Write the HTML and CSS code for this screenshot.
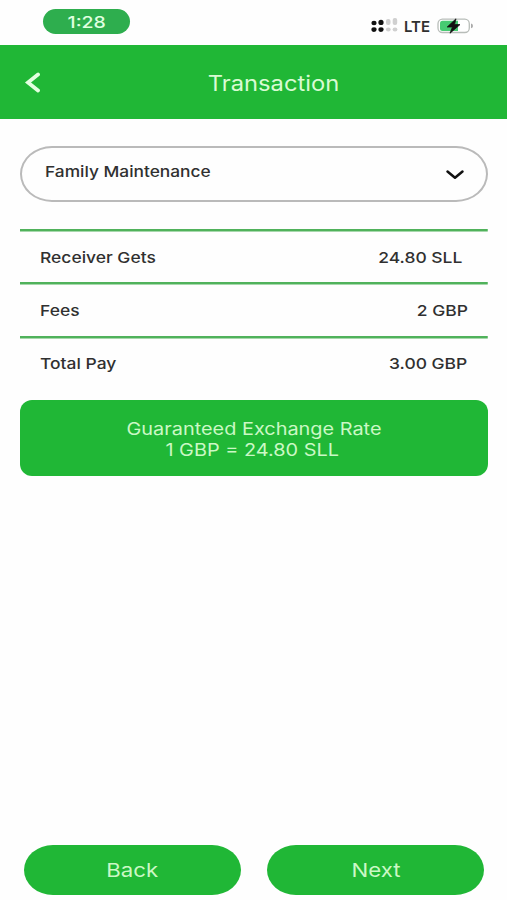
FILE: index.html
```html
<!DOCTYPE html>
<html lang="en">
<head>
<meta charset="utf-8">
<title>Transaction</title>
<link rel="stylesheet" href="styles.css">
</head>
<body>
<div class="status">
  <div class="time"><span class="wide">1:28</span></div>
  <div class="indicators">
    <svg class="signal" width="28" height="14" viewBox="0 0 28 14">
      <g fill="#111"><ellipse cx="3" cy="4" rx="2.6" ry="2.2"/><ellipse cx="10" cy="3.4" rx="2.6" ry="2.7"/><ellipse cx="3" cy="10.6" rx="2.6" ry="2.3"/><ellipse cx="10" cy="10.6" rx="2.6" ry="2.3"/></g>
      <g fill="#d0d0d0"><rect x="15" y="0" width="4.5" height="6" rx="2"/><rect x="21.7" y="-1" width="4.5" height="7" rx="2"/><ellipse cx="17.3" cy="10.6" rx="2.4" ry="2"/><ellipse cx="24" cy="10.6" rx="2.4" ry="2"/></g>
    </svg>
    <span class="lte">LTE</span>
    <svg class="battery" width="37" height="16" viewBox="0 0 37 16">
      <rect x="1" y="1.2" width="31.3" height="13.3" rx="4.5" fill="#fff" stroke="#b8bdb9" stroke-width="1.3"/>
      <path d="M5.5 2.8H21V13H5.5Q3 13 3 10.5V5.3Q3 2.8 5.5 2.8Z" fill="#47cb72"/>
      <path d="M34 5.6Q36 6 36 7.9T34 10.2Z" fill="#aaa"/>
      <path d="M19 .8 10.2 9H15.5L13 15.2 23 6.6H17.5Z" fill="#111" stroke="#111" stroke-width=".8" stroke-linejoin="round"/>
    </svg>
  </div>
</div>
<header class="header">
  <svg class="back-icon" width="16" height="22" viewBox="0 0 16 22"><path d="M14 3.5 4 11.5 14 19.5" fill="none" stroke="#e4ffe0" stroke-width="3.8" stroke-linecap="round"/></svg>
  <h1 class="wide title">Transaction</h1>
</header>
<main class="content">
  <div class="select">
    <span class="wide left">Family Maintenance</span>
    <svg width="20" height="12" viewBox="0 0 20 12"><path d="M2.5 3.5 10 9.8 17.500 3.500" fill="none" stroke="#111" stroke-width="2.5" stroke-linecap="round" stroke-linejoin="round"/></svg>
  </div>
  <div class="rows">
    <div class="row"><span class="wide left">Receiver Gets</span><span class="wide right inset">24.80 SLL</span></div>
    <div class="row"><span class="wide left">Fees</span><span class="wide right">2 GBP</span></div>
    <div class="row"><span class="wide left">Total Pay</span><span class="wide right">3.00 GBP</span></div>
  </div>
  <div class="rate"><span class="wide">Guaranteed Exchange Rate</span><span class="wide equation">1 GBP = 24.80 SLL</span></div>
</main>
<footer class="actions">
  <button class="button"><span class="wide">Back</span></button>
  <button class="button"><span class="wide">Next</span></button>
</footer>
</body>
</html>
```
FILE: styles.css
```css
* { box-sizing: border-box; }
body {
  margin: 0;
  height: 900px;
  display: flex;
  flex-direction: column;
  background: #fefefe;
  color: #303030;
  font-family: Inter, "Liberation Sans", sans-serif;
  overflow: hidden;
}
.wide { display: inline-block; transform: scaleX(1.17); white-space: nowrap; }
.left { transform-origin: left center; }
.right { transform-origin: right center; }
.status {
  height: 45px;
  padding: 9px 33px 0 43px;
  display: flex;
  justify-content: space-between;
}
.time {
  width: 87px;
  height: 25px;
  border-radius: 13px;
  background: #2eae4e;
  color: #e0ffe0;
  font-size: 16px;
  font-weight: 500;
  line-height: 26px;
  text-align: center;
}
.time .wide { transform: scaleX(1.22); }
.indicators { display: flex; height: 34px; align-items: center; }
.signal { overflow: visible; }
.lte { margin: 0 7px 0 5px; font-size: 15px; font-weight: 600; letter-spacing: 0; }
.header {
  height: 74px;
  padding-left: 24px;
  display: flex;
  align-items: center;
  background: #20b736;
  color: #d9fbd3;
  overflow: hidden;
}
.title {
  flex: 1;
  margin: 2px 0 0;
  text-align: center;
  font-size: 21px;
  font-weight: 400;
  transform: scaleX(1.13);
  transform-origin: center;
}
.content { flex: 1; padding: 27px 19.5px 0 20px; }
.select {
  height: 56px;
  padding: 0 21px 0 23px;
  border: 2px solid #bababa;
  border-radius: 32px / 28px;
  display: flex;
  justify-content: space-between;
  align-items: center;
  font-size: 15px;
  font-weight: 450;
}
.select .wide { margin-top: -6px; transform: scaleX(1.155); }
.rows { margin-top: 27px; }
.row {
  height: 53.3px;
  padding: 2px 20px 0;
  background: linear-gradient(#50b25b, #50b25b) top / 100% 2.5px no-repeat;
  display: flex;
  justify-content: space-between;
  align-items: center;
  font-size: 15px;
  font-weight: 450;
}
.row .wide { margin-top: 1px; transform: scaleX(1.163); }
.row .inset { margin-right: 5px; }
.rate {
  height: 76px;
  margin-top: 11.5px;
  padding-top: 3px;
  border-radius: 12px;
  background: #20b736;
  color: #cbf8c5;
  display: flex;
  flex-direction: column;
  align-items: center;
  justify-content: center;
  font-size: 17px;
  line-height: 21px;
}
.equation { margin-left: -4px; }
.actions { height: 55px; padding: 0 23px 0 24px; display: flex; gap: 26px; }
.button {
  flex: 1;
  height: 50px;
  padding: 1px 0 0;
  border: 0;
  border-radius: 29px / 25px;
  background: #20b736;
  color: #cbf8c5;
  font: 400 19px Inter, "Liberation Sans", sans-serif;
}
```
